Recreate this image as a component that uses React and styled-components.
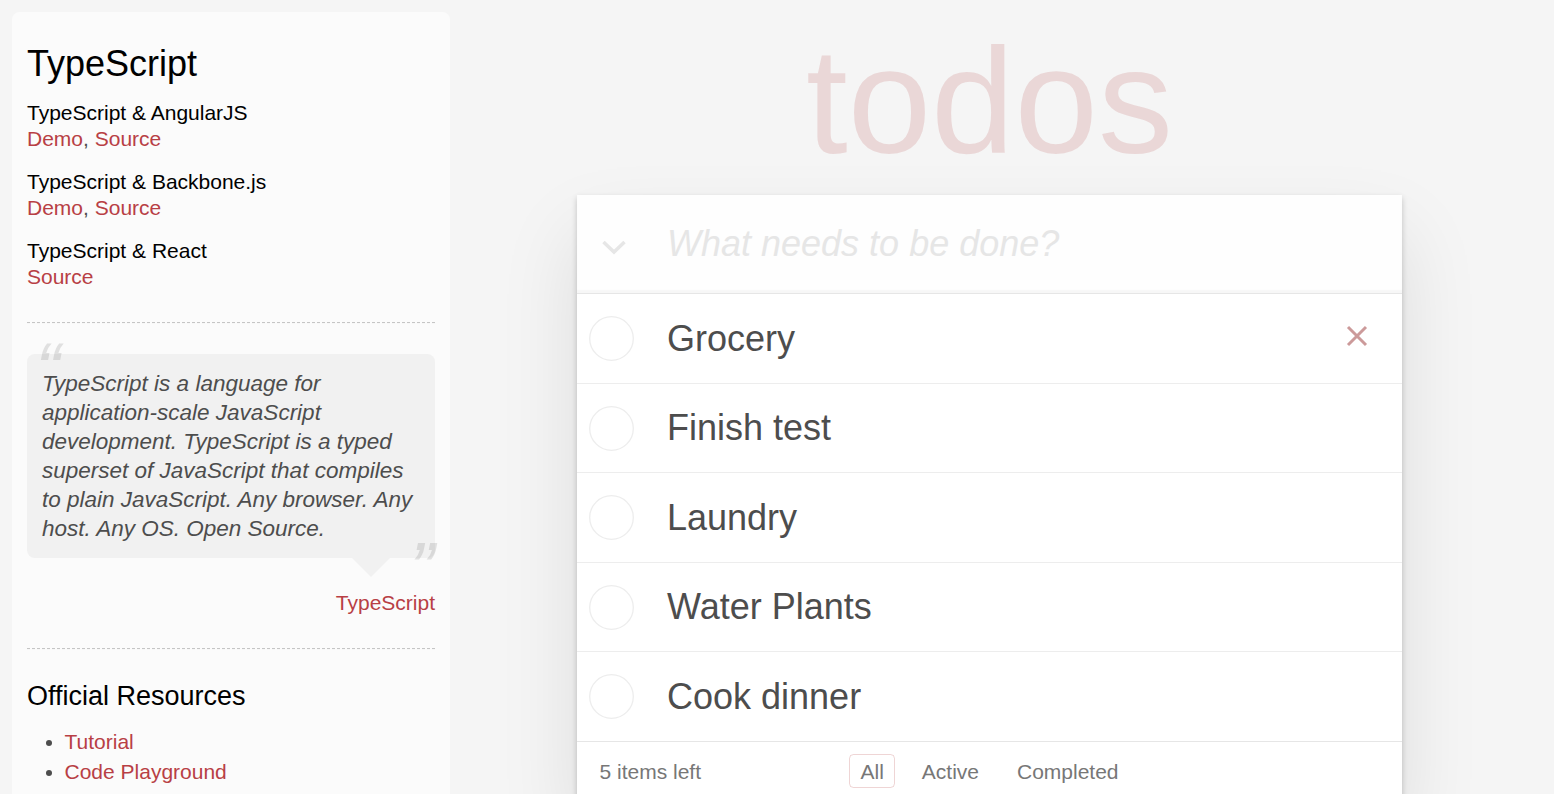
import React from 'react'
import styled, { createGlobalStyle } from 'styled-components'

const GlobalStyle = createGlobalStyle`
  * { box-sizing: border-box; }
  html, body { margin: 0; padding: 0; }
  body {
    background: #f5f5f5;
    color: #4d4d4d;
    font-family: "Liberation Sans", Arial, Helvetica, sans-serif;
    font-size: 21px;
    line-height: 29.4px;
    font-weight: 300;
  }
`

const todos = ['Grocery', 'Finish test', 'Laundry', 'Water Plants', 'Cook dinner']

const examples = [
  { name: 'TypeScript & AngularJS', links: ['Demo', 'Source'] },
  { name: 'TypeScript & Backbone.js', links: ['Demo', 'Source'] },
  { name: 'TypeScript & React', links: ['Source'] },
]

const groups = [
  {
    heading: 'Official Resources',
    links: ['Tutorial', 'Code Playground', 'Documentation', 'Applications built with TypeScript', 'Blog', 'Source Code'],
  },
  {
    heading: 'Articles and Guides',
    links: ['Thoughts on TypeScript', 'ScreenCast - Why I Like TypeScript'],
  },
  {
    heading: 'Community',
    links: ['TypeScript on StackOverflow', 'Forums', 'TypeScript on Twitter'],
  },
]

export default function App() {
  return (
    <>
      <GlobalStyle />
      <Page>
        <Sidebar>
          <Heading3>TypeScript</Heading3>
          {examples.map(ex => (
            <React.Fragment key={ex.name}>
              <Heading5>{ex.name}</Heading5>
              <ExampleLinks>
                {ex.links.map((l, i) => (
                  <React.Fragment key={l}>
                    {i > 0 && ', '}
                    <Link href="#">{l}</Link>
                  </React.Fragment>
                ))}
              </ExampleLinks>
            </React.Fragment>
          ))}

          <Rule />

          <Quote>
            <Bubble>
              <QuoteText>
                TypeScript is a language for application-scale JavaScript development. TypeScript is a typed
                superset of JavaScript that compiles to plain JavaScript. Any browser. Any host. Any OS. Open Source.
              </QuoteText>
            </Bubble>
            <Caption>
              <Link href="#">TypeScript</Link>
            </Caption>
          </Quote>

          <Rule />

          {groups.map(g => (
            <React.Fragment key={g.heading}>
              <Heading4>{g.heading}</Heading4>
              <ResourceList>
                {g.links.map(l => (
                  <li key={l}>
                    <Link href="#">{l}</Link>
                  </li>
                ))}
              </ResourceList>
            </React.Fragment>
          ))}

          <SideFooter>
            <Rule />
            <em>
              If you have other helpful links to share, or find any of the links above no longer work, please{' '}
              <Link href="#">let us know</Link>.
            </em>
          </SideFooter>
        </Sidebar>

        <Main>
          <Title>todos</Title>
          <TodoApp>
            <Header>
              <ToggleAll>
                <svg width="26" height="15" viewBox="0 0 26 15">
                  <polyline points="2.5,2 13,12 23.5,2" fill="none" stroke="#e6e6e6" strokeWidth="3.5" />
                </svg>
              </ToggleAll>
              <NewTodo placeholder="What needs to be done?" />
            </Header>

            <List>
              {todos.map((t, i) => (
                <Item key={t}>
                  <Check>
                    <svg width="45" height="45" viewBox="0 0 45 45">
                      <circle cx="22.5" cy="22.5" r="21.8" fill="none" stroke="#ededed" strokeWidth="1.3" />
                    </svg>
                  </Check>
                  <ItemLabel>{t}</ItemLabel>
                  <Destroy $visible={i === 0} aria-label="delete">
                    <svg width="22" height="22" viewBox="0 0 22 22">
                      <path d="M2 2 L20 20 M20 2 L2 20" stroke="#cc9a9a" strokeWidth="3" />
                    </svg>
                  </Destroy>
                </Item>
              ))}
            </List>

            <Footer>
              <Count>5 items left</Count>
              <Filters>
                <FilterItem>
                  <FilterLink href="#" $selected>All</FilterLink>
                </FilterItem>
                <FilterItem>
                  <FilterLink href="#">Active</FilterLink>
                </FilterItem>
                <FilterItem>
                  <FilterLink href="#">Completed</FilterLink>
                </FilterItem>
              </Filters>
              <span />
            </Footer>
          </TodoApp>

          <Info>
            <p>Double-click to edit a todo</p>
            <p>Created by Remo H. Jansen</p>
            <p>Part of TodoMVC</p>
          </Info>
        </Main>
      </Page>
    </>
  )
}

const Page = styled.div`
  display: flex;
  align-items: flex-start;
`

const Sidebar = styled.aside`
  flex: none;
  width: 438px;
  margin: 12px 0 0 12px;
  padding: 15px;
  border-radius: 7.5px;
  background: rgba(255, 255, 255, 0.6);
`

const Heading3 = styled.h3`
  margin: 15px 0;
  font-size: 36px;
  line-height: 1.2;
  font-weight: 500;
  color: #000;
`

const Heading4 = styled.h4`
  margin: 15px 0;
  font-size: 27px;
  line-height: 1.2;
  font-weight: 500;
  color: #000;
`

const Heading5 = styled.h5`
  margin: 15px 0 0;
  font-size: 21px;
  line-height: 1.2;
  font-weight: 500;
  color: #000;
`

const ExampleLinks = styled.div`
  font-size: 21px;
  line-height: 28.8px;
`

const Link = styled.a`
  color: #b83f45;
  font-weight: normal;
  text-decoration: none;
`

const Rule = styled.hr`
  margin: 30px 0;
  border: 0;
  border-top: 1px dashed #c5c5c5;
  border-bottom: 1px dashed #f7f7f7;
`

const Quote = styled.blockquote`
  margin: 30px 0 0;
`

const Bubble = styled.div`
  position: relative;
  padding: 15px;
  background: rgba(0, 0, 0, 0.04);
  border-radius: 7.5px;

  &::after {
    content: '';
    position: absolute;
    top: 100%;
    right: 45px;
    border: 19.5px solid transparent;
    border-top-color: rgba(0, 0, 0, 0.04);
  }
`

const QuoteText = styled.p`
  margin: 0;
  font-size: 22.5px;
  line-height: 29px;
  font-style: italic;
  font-weight: 300;

  &::before,
  &::after {
    position: absolute;
    font-size: 75px;
    line-height: 97.5px;
    opacity: 0.15;
  }
  &::before {
    content: '“';
    top: -33px;
    left: 8.5px;
  }
  &::after {
    content: '”';
    bottom: -59px;
    right: 0.5px;
  }
`

const Caption = styled.div`
  margin-top: 30px;
  text-align: right;
`

const ResourceList = styled.ul`
  margin: 0 0 45px 37.5px;
  padding: 0;

  li {
    line-height: 30px;
  }
`

const SideFooter = styled.footer`
  font-size: 21px;
  line-height: 29.4px;
`

/* right padding keeps the room the scrollbar takes in the reference */
const Main = styled.main`
  flex: 1;
  min-width: 0;
  padding-right: 25px;
  display: flex;
  flex-direction: column;
  align-items: center;
`

const Title = styled.h1`
  margin: 0;
  padding-top: 8px;
  width: 825px;
  font-size: 150px;
  line-height: 187px;
  font-weight: 100;
  text-align: center;
  color: rgba(175, 47, 47, 0.15);
`

const TodoApp = styled.section`
  width: 825px;
  background: #fff;
  box-shadow: 0 3px 6px 0 rgba(0, 0, 0, 0.2), 0 37.5px 75px 0 rgba(0, 0, 0, 0.1);
`

const Header = styled.header`
  position: relative;
`

const ToggleAll = styled.span`
  position: absolute;
  left: 24px;
  top: 45px;
  display: flex;
  pointer-events: none;
`

const NewTodo = styled.input`
  display: block;
  width: 100%;
  height: 98.4px;
  margin: 0;
  padding: 24px 24px 24px 90px;
  border: none;
  outline: none;
  font-family: inherit;
  font-size: 36px;
  line-height: 50.4px;
  color: #4d4d4d;
  background: rgba(0, 0, 0, 0.003);
  box-shadow: inset 0 -3px 1.5px rgba(0, 0, 0, 0.03);

  &::placeholder {
    font-style: italic;
    font-weight: 300;
    color: #e6e6e6;
  }
`

const List = styled.ul`
  margin: 0;
  padding: 0;
  list-style: none;
  border-top: 1px solid #e6e6e6;
`

const Item = styled.li`
  display: flex;
  align-items: center;
  font-size: 36px;
  border-bottom: 1px solid #ededed;

  &:last-child {
    border-bottom: none;
  }
`

const Check = styled.span`
  flex: none;
  display: flex;
  margin-left: 12px;
`

const ItemLabel = styled.label`
  flex: 1;
  padding: 22.5px 22.5px 22.5px 33px;
  line-height: 43.5px;
  font-weight: 400;
  color: #4d4d4d;
  word-break: break-all;
`

const Destroy = styled.button`
  flex: none;
  width: 60px;
  height: 60px;
  margin: 0 15px 6px 0;
  padding: 0;
  border: 0;
  background: none;
  display: flex;
  align-items: center;
  justify-content: center;
  visibility: ${p => (p.$visible ? 'visible' : 'hidden')};
`

const Footer = styled.footer`
  display: grid;
  grid-template-columns: 1fr auto 1fr;
  align-items: center;
  padding: 15px 22.5px;
  border-top: 1px solid #e6e6e6;
  color: #777;
  font-size: 21px;
  line-height: 30px;
`

const Count = styled.span`
  text-align: left;
`

const Filters = styled.ul`
  margin: 0;
  padding: 0;
  list-style: none;
  white-space: nowrap;
`

const FilterItem = styled.li`
  display: inline;

  & + & {
    margin-left: 6px;
  }
`

const FilterLink = styled.a`
  margin: 0 4.5px;
  padding: 4.5px 10.5px;
  color: inherit;
  text-decoration: none;
  border: 1px solid ${p => (p.$selected ? 'rgba(175, 47, 47, 0.2)' : 'transparent')};
  border-radius: 4.5px;
`

const Info = styled.footer`
  margin-top: 157px;
  color: #bfbfbf;
  font-size: 15px;
  text-align: center;
  text-shadow: 0 1px 0 rgba(255, 255, 255, 0.5);

  p {
    line-height: 1;
    margin: 15px 0;
  }
`
